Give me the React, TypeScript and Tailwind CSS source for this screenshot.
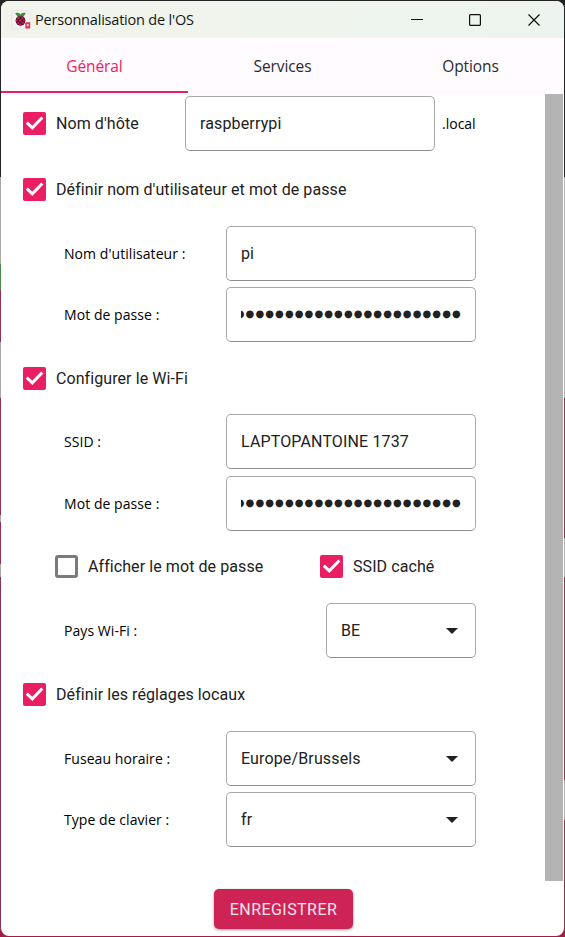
import type { ReactNode } from 'react';

const PASSWORD_MASK = '●'.repeat(23);

function CheckBox({ checked }: { checked: boolean }) {
  if (!checked) {
    return <span className="h-[23px] w-[23px] shrink-0 rounded-[3px] border-[3px] border-[#7b7b7b]" />;
  }
  return (
    <span className="h-[23px] w-[23px] shrink-0 rounded-[2px] bg-[#e91e63]">
      <svg viewBox="0 0 23 23" className="h-full w-full">
        <path d="M3.800 10.700 L9.300 15.800 L19.300 5.500" fill="none" stroke="#fff" strokeWidth="3" />
      </svg>
    </span>
  );
}

function Check({ checked = true, children }: { checked?: boolean; children: ReactNode }) {
  return (
    <label className="flex items-center gap-[10px]">
      <CheckBox checked={checked} />
      <span className="whitespace-nowrap font-[Roboto,sans-serif] text-[16px] leading-[20px] tracking-[0.08px] text-[#212121]">{children}</span>
    </label>
  );
}

function Box({ children, narrow = false, select = false }: { children: ReactNode; narrow?: boolean; select?: boolean }) {
  return (
    <div
      className={`flex h-[55px] shrink-0 items-center justify-between rounded-[5px] border border-[#a9a9a9] border-b-[#8c8c8c] px-[14px] font-[Roboto,sans-serif] text-[16px] tracking-[0.14px] text-[#212121] ${
        narrow ? 'w-[150px]' : 'w-[250px]'
      }`}
    >
      {children}
      {select && (
        <svg viewBox="0 0 12 6" className="mr-[3.5px] h-[6px] w-[12px]">
          <path d="M0 0H12L6 6Z" fill="#212121" />
        </svg>
      )}
    </div>
  );
}

function Password() {
  return (
    <span className="flex w-[220px] justify-end overflow-hidden whitespace-nowrap pb-px font-['DejaVu_Sans',sans-serif] text-[10px] leading-[20px] tracking-[1.1px]">
      <span className="-mr-[0.8px]">{PASSWORD_MASK}</span>
    </span>
  );
}

function Row({ label, children }: { label: ReactNode; children: ReactNode }) {
  return (
    <div className="flex items-center justify-between pl-[63px] pr-[88px]">
      <span className="whitespace-nowrap pt-px font-['Open_Sans',sans-serif] text-[14px] leading-[20px] tracking-[0.06px] text-black">{label}</span>
      {children}
    </div>
  );
}

function Raspberry() {
  return (
    <svg viewBox="0 0 20 20" className="h-[20px] w-[20px]">
      <rect x="0.5" y="0.5" width="18.5" height="18.5" rx="3" fill="#f3f1f1" stroke="#dfe0dc" strokeWidth=".7" />
      <ellipse cx="9.500" cy="10.600" rx="4.900" ry="5.100" fill="#4a1226" />
      <path d="M9.500 6.500C7.500 6.800 4.800 5.800 4.300 3C7 2.300 9 3 9.500 4.800C10 3 12 2.300 14.700 3C14.200 5.800 11.500 6.800 9.500 6.500Z" fill="#3d8b37" />
      <g fill="#c21a4c">
        <circle cx="7.500" cy="8" r="1.300" />
        <circle cx="11.500" cy="8" r="1.300" />
        <circle cx="9.500" cy="10.500" r="1.500" />
        <circle cx="6" cy="10.600" r="1.100" />
        <circle cx="13" cy="10.600" r="1.100" />
        <circle cx="7.400" cy="13" r="1.200" />
        <circle cx="11.600" cy="13" r="1.200" />
        <circle cx="9.500" cy="14.600" r=".9" />
      </g>
      <path d="M15.300 12.200H19.200V18.500H14.300V13.200Z" fill="#d9355f" />
      <path d="M15.700 14H17.800V16.300H15.700Z" fill="#f5b6c5" />
    </svg>
  );
}

export default function App() {
  return (
    <div className="flex h-[937px] w-[565px] bg-[linear-gradient(#242424_0_177px,#a8a8a8_177px_264px,#4a8a4a_264px_290px,#963056_290px_342px,#a8a8a8_342px_398px,#963056_398px_515px,#a8a8a8_515px_522px,#963056_522px_564px,#a8a8a8_564px_577px,#8c3450_577px_930px,#a31c48_930px)] py-px pl-px">
      <div className="flex h-full w-[563px] shrink-0 flex-col overflow-hidden rounded-[8px] bg-white">
        <header className="flex h-[37px] shrink-0 items-center bg-linear-to-r from-[#f2f4ec] to-[#edf4ef] pl-[10px]">
          <Raspberry />
          <span className="ml-[4px] whitespace-nowrap font-['Open_Sans',sans-serif] text-[14.5px] leading-[20px] tracking-[-0.2px] text-[#161616]">Personnalisation de l'OS</span>
          <svg viewBox="0 0 130 14" className="ml-auto mr-[23px] h-[14px] w-[130px]" fill="none" stroke="#111" strokeWidth="1.2">
            <path d="M0 6.500H12" />
            <rect x="58.600" y="1.600" width="10.800" height="10.800" rx="1" />
            <path d="M117.500 1.500L128.500 12.500M128.500 1.500L117.500 12.500" />
          </svg>
        </header>
        <nav className="grid h-[56px] shrink-0 grid-cols-[187px_188px_188px] bg-[#fffbfe] pb-px font-['Open_Sans',sans-serif] text-[15.5px] leading-[20px] tracking-[-0.1px] text-[#2a2a2e]">
          <span className="flex items-center justify-center border-b-2 border-[#e91e63] pt-[2px] text-[#e91e63]">Général</span>
          <span className="flex items-center justify-center pl-px">Services</span>
          <span className="flex items-center justify-center pl-px">Options</span>
        </nav>
        <main className="flex h-[787px] shrink-0">
          <div className="flex w-[563px] shrink-0 flex-col pt-[2px]">
            <div className="flex h-[55px] items-center pl-[22px]">
              <div className="w-[162px]">
                <Check>Nom d'hôte</Check>
              </div>
              <Box>raspberrypi</Box>
              <span className="ml-[7px] pt-px font-['Open_Sans',sans-serif] text-[14px] leading-[20px] text-black">.local</span>
            </div>
            <div className="flex h-[75px] items-center pl-[22px] pt-[2px]">
              <Check>Définir nom d'utilisateur et mot de passe</Check>
            </div>
            <div className="flex flex-col gap-[6px]">
              <Row label="Nom d'utilisateur :">
                <Box>pi</Box>
              </Row>
              <Row label="Mot de passe :">
                <Box>
                  <Password />
                </Box>
              </Row>
            </div>
            <div className="flex h-[72px] items-center pl-[22px] pt-px">
              <Check>Configurer le Wi-Fi</Check>
            </div>
            <div className="flex flex-col gap-[7px]">
              <Row label="SSID :">
                <Box>LAPTOPANTOINE 1737</Box>
              </Row>
              <Row label="Mot de passe :">
                <Box>
                  <Password />
                </Box>
              </Row>
            </div>
            <div className="flex h-[72px] items-center pb-px pl-[54px]">
              <div className="w-[265px]">
                <Check checked={false}>Afficher le mot de passe</Check>
              </div>
              <Check>SSID caché</Check>
            </div>
            <Row label="Pays Wi-Fi :">
              <Box narrow select>BE</Box>
            </Row>
            <div className="flex h-[73px] items-center pl-[22px]">
              <Check>Définir les réglages locaux</Check>
            </div>
            <div className="flex flex-col gap-[6px]">
              <Row label="Fuseau horaire :">
                <Box select>Europe/Brussels</Box>
              </Row>
              <Row label="Type de clavier :">
                <Box select>fr</Box>
              </Row>
            </div>
          </div>
          <div className="-ml-[19px] h-full w-[18px] shrink-0 bg-[#b4b4b4]" />
        </main>
        <footer className="flex justify-center pl-[2px] pt-[8px]">
          <button className="h-[40px] w-[139px] rounded-[5px] bg-[#cd2355] pt-px font-[Roboto,sans-serif] text-[16px] tracking-[0.45px] text-[#fbe4ec] shadow-[0_1px_3px_rgba(0,0,0,0.4)]">
            ENREGISTRER
          </button>
        </footer>
      </div>
      <div className="-my-px w-px shrink-0 bg-[linear-gradient(#242424_0_177px,#b0b0b0_177px_398px,#8c3450_398px_538px,#b0b0b0_538px_577px,#8c3450_577px_780px,#b0b0b0_780px_820px,#8c3450_820px_930px,#a31c48_930px)]" />
    </div>
  );
}
